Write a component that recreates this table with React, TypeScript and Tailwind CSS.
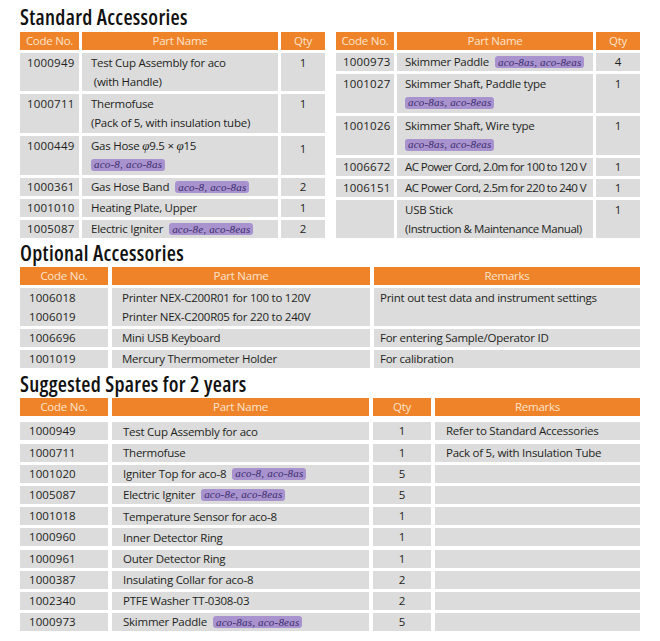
import React from "react";

type Content = React.ReactNode;

function Badge({ children }: { children: React.ReactNode }) {
  return (
    <span className="inline-flex items-center h-[12px] px-[3px] rounded-[3px] bg-[#a893cf] text-[#3b2a6c] italic font-['Liberation_Serif',serif] text-[11px] leading-none tracking-[0.2px] whitespace-nowrap">
      {children}
    </span>
  );
}

function Title({ children, cls }: { children: React.ReactNode; cls: string }) {
  return (
    <div
      className={`font-semibold font-stretch-condensed text-[21px] leading-[24px] tracking-[0.3px] text-[#111] ${cls}`}
    >
      {children}
    </div>
  );
}

function Head({ children }: { children: React.ReactNode }) {
  return (
    <div className="h-[18px] bg-[#ef8329] text-[#fde3cd] text-[11.5px] leading-[18px] text-center whitespace-nowrap">
      {children}
    </div>
  );
}

function Lines({ lines, pad }: { lines: Content[]; pad: string }) {
  return (
    <div className={`bg-[#dcdcdd] ${pad} flex flex-col`}>
      {lines.map((l, i) => (
        <div key={i} className={`${lines.length > 1 ? "h-[19px]" : "h-[18px]"} flex items-center gap-[6px] whitespace-nowrap`}>
          {l}
        </div>
      ))}
    </div>
  );
}

function Cell({ children, cls }: { children?: React.ReactNode; cls: string }) {
  return <div className={`bg-[#dcdcdd] whitespace-nowrap ${cls}`}>{children}</div>;
}

const phi = <i className="font-['Liberation_Serif',serif] text-[13px]">φ</i>;

export default function App() {
  return (
    <div className="w-[660px] h-[641px] bg-white px-[20px] pt-[5px] font-['Open_Sans',sans-serif] text-[11.5px] tracking-[-0.25px] text-[#231f20]">
      {/* Standard Accessories */}
      <Title cls="mb-[3px]">Standard Accessories</Title>
      <div className="flex gap-[11px] items-start">
        <div className="grid grid-cols-[59px_196px_44px] gap-x-[3px] gap-y-[3px]">
          <Head>Code No.</Head>
          <Head>Part Name</Head>
          <Head>Qty</Head>

          <Cell cls="pl-[7px] leading-[19px] h-[38px] tracking-[0.2px]">1000949</Cell>
          <Lines pad="pl-[9px] h-[38px]" lines={["Test Cup Assembly for aco", "\u00a0(with Handle)"]} />
          <Cell cls="text-center leading-[19px]">1</Cell>

          <Cell cls="pl-[7px] leading-[19px] h-[39px] tracking-[0.2px]">1000711</Cell>
          <Lines pad="pl-[9px] h-[39px]" lines={["Thermofuse", "(Pack of 5, with insulation tube)"]} />
          <Cell cls="text-center leading-[19px]">1</Cell>

          <Cell cls="pl-[7px] leading-[19px] h-[39px] tracking-[0.2px]">1000449</Cell>
          <Lines
            pad="pl-[9px] h-[39px]"
            lines={[
              <span key="g">
                Gas Hose {phi}9.5 × {phi}15
              </span>,
              <Badge key="b">aco-8, aco-8as</Badge>,
            ]}
          />
          <Cell cls="text-center leading-[19px] pt-[3px]">1</Cell>

          <Cell cls="pl-[7px] leading-[18px] h-[18px] tracking-[0.2px]">1000361</Cell>
          <Lines pad="pl-[9px]" lines={[<>Gas Hose Band<Badge>aco-8, aco-8as</Badge></>]} />
          <Cell cls="text-center leading-[18px]">2</Cell>

          <Cell cls="pl-[7px] leading-[18px] h-[18px] tracking-[0.2px]">1001010</Cell>
          <Lines pad="pl-[9px]" lines={["Heating Plate, Upper"]} />
          <Cell cls="text-center leading-[18px]">1</Cell>

          <Cell cls="pl-[7px] leading-[18px] h-[18px] tracking-[0.2px]">1005087</Cell>
          <Lines pad="pl-[9px]" lines={[<>Electric Igniter<Badge>aco-8e, aco-8eas</Badge></>]} />
          <Cell cls="text-center leading-[18px]">2</Cell>
        </div>

        <div className="grid grid-cols-[58px_196px_44px] gap-x-[3px] gap-y-[3px]">
          <Head>Code No.</Head>
          <Head>Part Name</Head>
          <Head>Qty</Head>

          <Cell cls="pl-[7px] leading-[18px] h-[18px] tracking-[0.2px]">1000973</Cell>
          <Lines pad="pl-[8px]" lines={[<>Skimmer Paddle<Badge>aco-8as, aco-8eas</Badge></>]} />
          <Cell cls="text-center leading-[18px]">4</Cell>

          <Cell cls="pl-[7px] leading-[19px] h-[39px] tracking-[0.2px]">1001027</Cell>
          <Lines pad="pl-[8px] h-[39px]" lines={["Skimmer Shaft, Paddle type", <Badge key="b">aco-8as, aco-8eas</Badge>]} />
          <Cell cls="text-center leading-[19px]">1</Cell>

          <Cell cls="pl-[7px] leading-[19px] h-[39px] tracking-[0.2px]">1001026</Cell>
          <Lines pad="pl-[8px] h-[39px]" lines={["Skimmer Shaft, Wire type", <Badge key="b">aco-8as, aco-8eas</Badge>]} />
          <Cell cls="text-center leading-[19px]">1</Cell>

          <Cell cls="pl-[7px] leading-[18px] h-[18px] tracking-[0.2px]">1006672</Cell>
          <Lines pad="pl-[8px]" lines={[<span key="a" className="tracking-[-0.55px]">AC Power Cord, 2.0m for 100 to 120 V</span>]} />
          <Cell cls="text-center leading-[18px]">1</Cell>

          <Cell cls="pl-[7px] leading-[18px] h-[18px] tracking-[0.2px]">1006151</Cell>
          <Lines pad="pl-[8px]" lines={[<span key="a" className="tracking-[-0.55px]">AC Power Cord, 2.5m for 220 to 240 V</span>]} />
          <Cell cls="text-center leading-[18px]">1</Cell>

          <Cell cls="h-[38px]" />
          <Lines pad="pl-[8px] h-[38px]" lines={["USB Stick", <span key="m" className="tracking-[-0.45px]">(Instruction &amp; Maintenance Manual)</span>]} />
          <Cell cls="text-center leading-[19px]">1</Cell>
        </div>
      </div>

      {/* Optional Accessories */}
      <Title cls="mt-[3px] mb-[2px]">Optional Accessories</Title>
      <div className="grid grid-cols-[88px_258px_266px] gap-x-[4px] gap-y-[3px]">
        <Head>Code No.</Head>
        <Head>Part Name</Head>
        <Head>Remarks</Head>

        <Lines pad="pl-[9px] h-[38px] tracking-[0.1px]" lines={["1006018", "1006019"]} />
        <Lines pad="pl-[10px] h-[38px]" lines={["Printer NEX-C200R01 for 100 to 120V", "Printer NEX-C200R05 for 220 to 240V"]} />
        <Cell cls="pl-[6px] leading-[19px]">Print out test data and instrument settings</Cell>

        <Cell cls="pl-[9px] leading-[18px] h-[18px] tracking-[0.1px]">1006696</Cell>
        <Cell cls="pl-[10px] leading-[18px]">Mini USB Keyboard</Cell>
        <Cell cls="pl-[6px] leading-[18px]">For entering Sample/Operator ID</Cell>

        <Cell cls="pl-[9px] leading-[18px] h-[18px] tracking-[0.1px]">1001019</Cell>
        <Cell cls="pl-[10px] leading-[18px]">Mercury Thermometer Holder</Cell>
        <Cell cls="pl-[6px] leading-[18px]">For calibration</Cell>
      </div>

      {/* Suggested Spares */}
      <Title cls="mt-[4px] mb-[2px]">Suggested Spares for 2 years</Title>
      <div className="grid grid-cols-[88px_257px_58px_205px] gap-x-[4px] gap-y-[3.2px]">
        <Head>Code No.</Head>
        <Head>Part Name</Head>
        <Head>Qty</Head>
        <Head>Remarks</Head>
        <div className="col-span-4 h-[0.8px] -mb-[3.2px]" />
        {[
          ["1000949", "Test Cup Assembly for aco", "1", "Refer to Standard Accessories"],
          ["1000711", "Thermofuse", "1", "Pack of 5, with Insulation Tube"],
          ["1001020", <>Igniter Top for aco-8<Badge>aco-8, aco-8as</Badge></>, "5", ""],
          ["1005087", <>Electric Igniter<Badge>aco-8e, aco-8eas</Badge></>, "5", ""],
          ["1001018", "Temperature Sensor for aco-8", "1", ""],
          ["1000960", "Inner Detector Ring", "1", ""],
          ["1000961", "Outer Detector Ring", "1", ""],
          ["1000387", "Insulating Collar for aco-8", "2", ""],
          ["1002340", "PTFE Washer TT-0308-03", "2", ""],
          ["1000973", <>Skimmer Paddle<Badge>aco-8as, aco-8eas</Badge></>, "5", ""],
        ].map((r, i) => (
          <React.Fragment key={i}>
            <Cell cls="pl-[9px] h-[18px] leading-[18px] tracking-[0.1px]">{r[0]}</Cell>
            <Lines pad="pl-[11px]" lines={[r[1]]} />
            <Cell cls="text-center leading-[18px]">{r[2]}</Cell>
            <Cell cls="pl-[11px] leading-[18px]">{r[3]}</Cell>
          </React.Fragment>
        ))}
      </div>
    </div>
  );
}
